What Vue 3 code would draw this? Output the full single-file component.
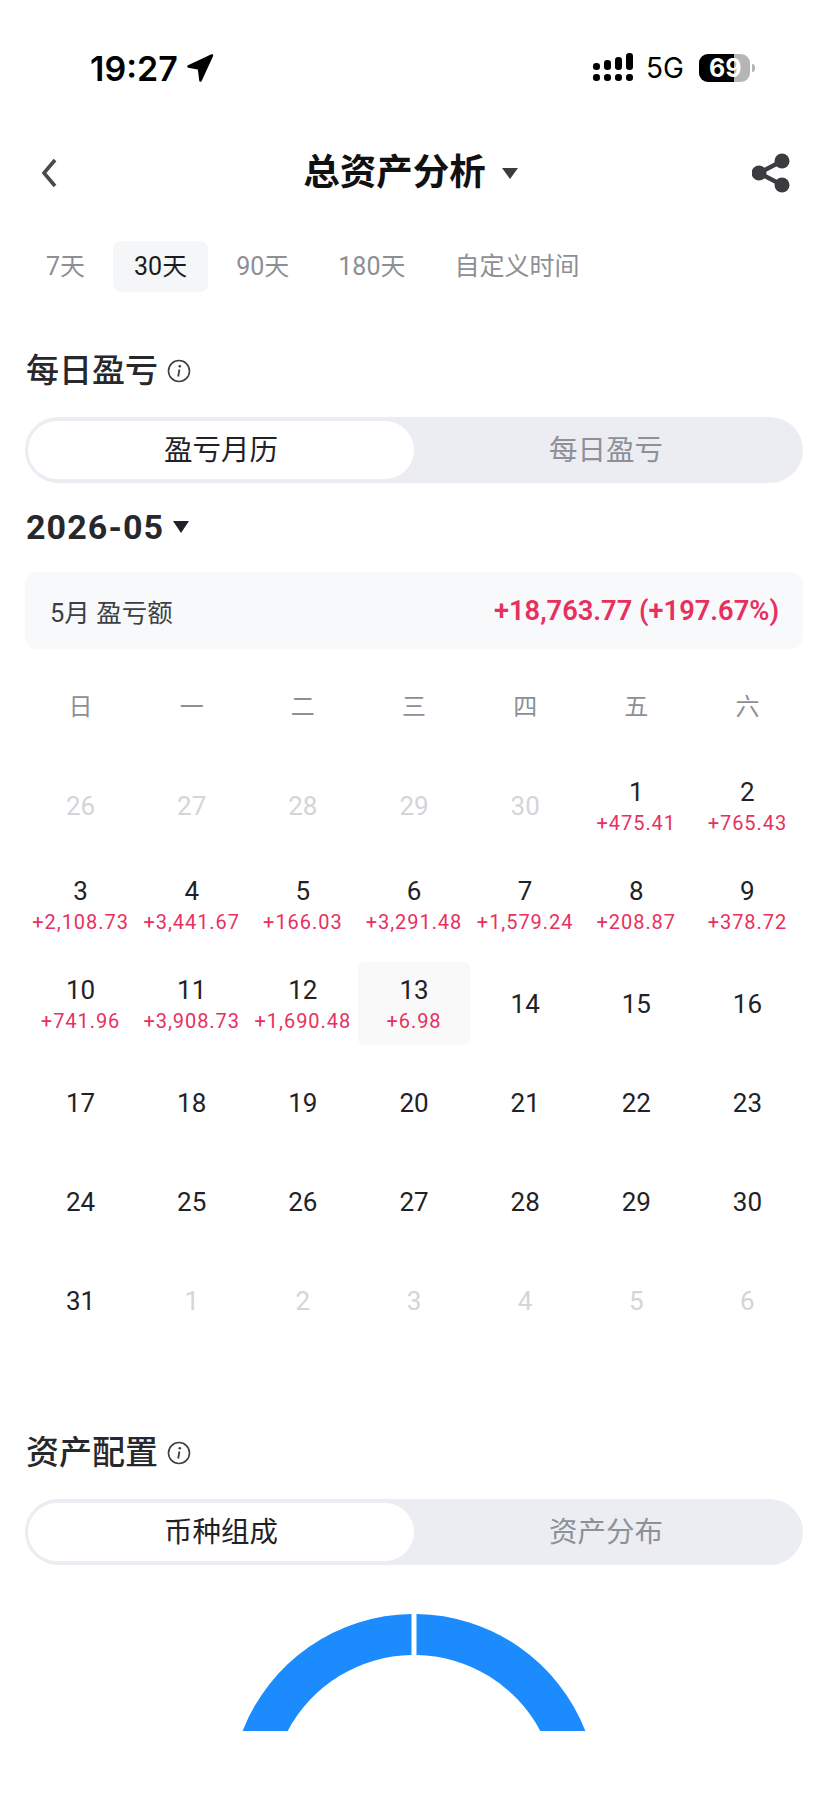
<template>
  <div class="page">
    <div class="status">
      <div class="status-left">
        <span class="time">19:27</span>
        <svg class="loc" width="28" height="28" viewBox="0 0 28 28">
          <path d="M26 1.5 2.5 12.5 13 14.5 14.5 26.5Z" fill="#000" stroke="#000" stroke-width="2.5" stroke-linejoin="round" />
        </svg>
      </div>
      <div class="status-right">
        <svg width="42" height="30" viewBox="0 0 42 30">
          <rect v-for="b in signal" :key="b.x + '-' + b.y" :x="b.x" :y="b.y" width="7" :height="b.h" rx="3.2" fill="#000" />
        </svg>
        <span class="net">5G</span>
        <div class="battery"><span class="level" /><span class="pct">69</span></div>
        <span class="nub" />
      </div>
    </div>

    <div class="nav">
      <svg class="back" width="38" height="32" viewBox="0 0 38 32">
        <path d="M14 3 3 16 14 29" fill="none" stroke="#47494d" stroke-width="3.6" />
      </svg>
      <div class="nav-title">
        <span>总资产分析</span>
        <i class="tri big" />
      </div>
      <svg width="38" height="40" viewBox="0 0 38 40">
        <path d="M30 8 7 20 30 32" fill="none" stroke="#3a3c40" stroke-width="4.5" />
        <circle cx="30" cy="8" r="7.5" fill="#3a3c40" />
        <circle cx="7" cy="20" r="7.5" fill="#3a3c40" />
        <circle cx="30" cy="32" r="7.5" fill="#3a3c40" />
      </svg>
    </div>

    <div class="tabs">
      <span v-for="t in ranges" :key="t" class="tab" :class="{ on: t === '30天' }">{{ t }}</span>
    </div>

    <div class="sec-title first">
      <span>每日盈亏</span>
      <svg class="info" width="24" height="24" viewBox="0 0 24 24">
        <circle cx="12" cy="12" r="10.5" fill="none" stroke="#3c3f44" stroke-width="1.6" />
        <circle cx="12.8" cy="7.2" r="1.3" fill="#3c3f44" />
        <path d="M12.4 10.5 11.2 17.5" stroke="#3c3f44" stroke-width="1.8" />
      </svg>
    </div>
    <div class="seg">
      <span class="seg-item active">盈亏月历</span>
      <span class="seg-item">每日盈亏</span>
    </div>

    <div class="month">
      <span>2026-05</span>
      <i class="tri small" />
    </div>

    <div class="summary">
      <span class="sum-label">5月 盈亏额</span>
      <span class="sum-value">+18,763.77 (+197.67%)</span>
    </div>

    <div class="week">
      <span v-for="w in weekdays" :key="w">{{ w }}</span>
    </div>
    <div class="days">
      <div v-for="(d, i) in days" :key="i" class="day" :class="{ muted: d.muted, today: d.n === 13 }">
        <span class="num">{{ d.n }}</span>
        <span v-if="d.pnl" class="pnl">{{ d.pnl }}</span>
      </div>
    </div>

    <div class="sec-title second">
      <span>资产配置</span>
      <svg class="info" width="24" height="24" viewBox="0 0 24 24">
        <circle cx="12" cy="12" r="10.5" fill="none" stroke="#3c3f44" stroke-width="1.6" />
        <circle cx="12.8" cy="7.2" r="1.3" fill="#3c3f44" />
        <path d="M12.4 10.5 11.2 17.5" stroke="#3c3f44" stroke-width="1.8" />
      </svg>
    </div>
    <div class="seg">
      <span class="seg-item active">币种组成</span>
      <span class="seg-item">资产分布</span>
    </div>

    <svg class="donut" width="400" height="117" viewBox="0 0 400 117">
      <path d="M197.5 0A184 184 0 0 0 28.6 117H73.7A143 143 0 0 1 197.5 41Z" fill="#1b8bfd" />
      <path d="M202.5 0A184 184 0 0 1 371.4 117H326.3A143 143 0 0 0 202.5 41Z" fill="#1b8bfd" />
    </svg>
  </div>
</template>

<script setup>
const ranges = ['7天', '30天', '90天', '180天', '自定义时间']
const weekdays = ['日', '一', '二', '三', '四', '五', '六']

const signal = [
  { x: 0, y: 10, h: 7 }, { x: 0, y: 21, h: 7 },
  { x: 11, y: 7, h: 10 }, { x: 11, y: 21, h: 7 },
  { x: 22, y: 4, h: 13 }, { x: 22, y: 21, h: 7 },
  { x: 33, y: 0, h: 17 }, { x: 33, y: 21, h: 7 },
]

const pnl = {
  1: '+475.41', 2: '+765.43', 3: '+2,108.73', 4: '+3,441.67', 5: '+166.03',
  6: '+3,291.48', 7: '+1,579.24', 8: '+208.87', 9: '+378.72', 10: '+741.96',
  11: '+3,908.73', 12: '+1,690.48', 13: '+6.98',
}

const days = [
  ...[26, 27, 28, 29, 30].map((n) => ({ n, muted: true })),
  ...Array.from({ length: 31 }, (_, i) => ({ n: i + 1, pnl: pnl[i + 1] })),
  ...[1, 2, 3, 4, 5, 6].map((n) => ({ n, muted: true })),
]
</script>

<style>
html, body { margin: 0; background: #fff; }
</style>

<style scoped>
.page {
  width: 828px;
  height: 1801px;
  overflow: hidden;
  box-sizing: border-box;
  padding: 0 25px;
  background: #fff;
  color: #1f2226;
  font-family: Roboto, "Noto Sans CJK SC", sans-serif;
}

.status {
  height: 120px;
  padding: 16px 0 0 65px;
  box-sizing: border-box;
  display: flex;
  align-items: center;
  justify-content: space-between;
}
.status-left { display: flex; align-items: center; gap: 8px; }
.time {
  font-family: Inter, sans-serif;
  font-size: 34px;
  font-weight: 600;
  color: #000;
}
.status-right { display: flex; align-items: center; margin-right: 48px; }
.net {
  margin-left: 11px;
  font-family: Inter, sans-serif;
  font-size: 28px;
  color: #000;
}
.battery {
  position: relative;
  width: 51px;
  height: 28px;
  margin-left: 15px;
  border-radius: 9px;
  overflow: hidden;
  background: #b5b5b5;
}
.level { display: block; width: 35px; height: 100%; background: #000; }
.pct {
  position: absolute;
  left: 10px;
  top: 0;
  line-height: 28px;
  color: #fff;
  font-family: Inter, sans-serif;
  font-size: 25px;
  font-weight: 700;
}
.nub {
  width: 3px;
  height: 8px;
  margin-left: 2px;
  border-radius: 0 3px 3px 0;
  background: #b5b5b5;
}

.nav {
  height: 104px;
  padding: 2px 13px 0 16px;
  box-sizing: border-box;
  display: flex;
  align-items: center;
  justify-content: space-between;
}
.nav-title {
  display: flex;
  align-items: center;
  gap: 16px;
  padding-right: 10px;
  font-size: 36.5px;
  font-weight: 700;
  line-height: 48px;
  color: #111;
}
.tri {
  display: block;
  border-style: solid;
  border-color: #3a3c40 transparent transparent;
}
.tri.big { border-width: 11px 8px 0; }
.tri.small { border-width: 12px 8px 0; border-top-color: #1f2226; }

.tabs { display: flex; gap: 7px; margin-top: 17px; }
.tab {
  height: 51px;
  padding: 0 21px;
  border-radius: 8px;
  font-size: 25px;
  line-height: 52px;
  color: #8c8f94;
}
.tab.on { background: #f5f6f8; color: #1a1c20; }

.sec-title {
  height: 44px;
  display: flex;
  align-items: center;
  gap: 9px;
  padding-left: 1px;
  font-size: 33px;
  line-height: 44px;
  font-weight: 500;
  color: #26282c;
}
.sec-title.first { margin-top: 57px; }
.sec-title.second { margin-top: 89px; }

.seg {
  height: 66px;
  margin-top: 24px;
  padding: 4px 5px 4px 3px;
  box-sizing: border-box;
  display: flex;
  border-radius: 33px;
  background: #ebedf2;
}
.seg-item {
  flex: 1;
  padding-top: 2px;
  text-align: center;
  font-size: 28.5px;
  line-height: 56px;
  color: #8d9197;
}
.seg-item.active {
  flex: 0 0 386px;
  border-radius: 29px;
  background: #fff;
  color: #1f2226;
}

.month {
  height: 44px;
  margin-top: 22px;
  display: flex;
  align-items: center;
  gap: 9px;
  padding-left: 1px;
  font-size: 34px;
  font-weight: 700;
  letter-spacing: 1.1px;
  color: #26282c;
}

.summary {
  height: 77px;
  margin-top: 23px;
  padding: 0 24px 0 25px;
  display: flex;
  align-items: center;
  justify-content: space-between;
  border-radius: 12px;
  background: #f8f9fb;
}
.sum-label { font-size: 25.5px; color: #3c3f44; }
.sum-value { font-size: 27.3px; font-weight: 600; color: #e8305f; }

.week {
  display: grid;
  grid-template-columns: repeat(7, 1fr);
  margin-top: 38px;
  height: 40px;
  line-height: 40px;
  text-align: center;
  font-size: 24px;
  color: #8c9096;
}

.days {
  display: grid;
  grid-template-columns: repeat(7, 1fr);
  grid-auto-rows: 83px;
  row-gap: 16px;
  margin-top: 37px;
}
.day {
  display: flex;
  flex-direction: column;
  align-items: center;
  justify-content: center;
  border-radius: 6px;
  white-space: nowrap;
}
.num { font-size: 26px; line-height: 34px; color: #1f2226; }
.pnl { font-size: 20px; line-height: 28px; letter-spacing: 0.95px; color: #e8305f; }
.day.muted .num { color: #d3d5d8; }
.day.today { background: #f9f9fa; }

.donut { display: block; margin: 49px 0 0 188.5px; }
</style>
